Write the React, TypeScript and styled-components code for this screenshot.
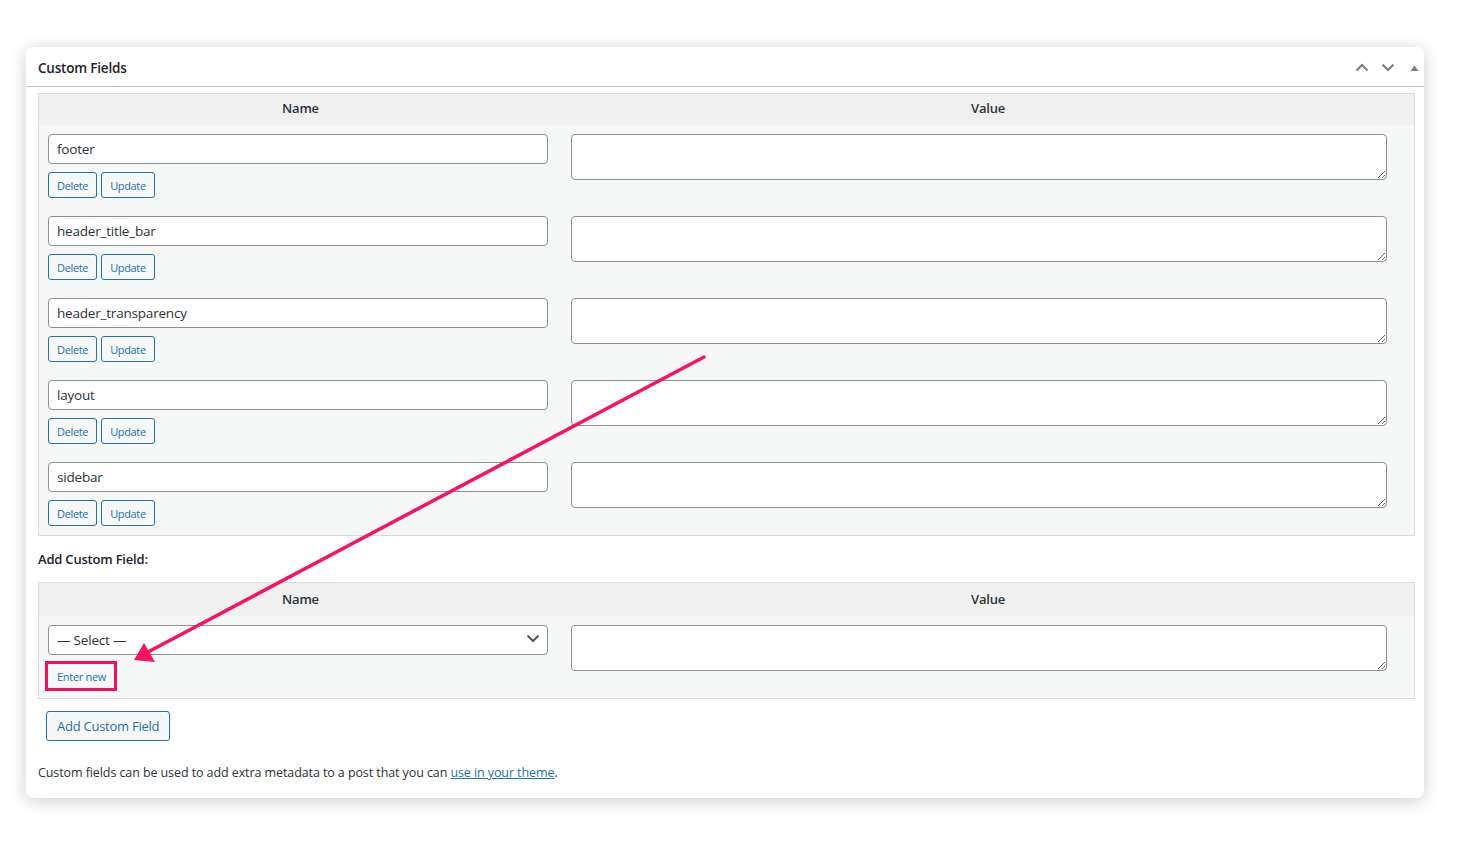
import React from "react";
import styled, { createGlobalStyle } from "styled-components";

const Global = createGlobalStyle`
  html, body { margin: 0; padding: 0; background: #ffffff; }
  body { font-family: "Open Sans", "Noto Sans", sans-serif; color: #1d2327; }
  * { box-sizing: border-box; }
`;

const Page = styled.div`
  position: relative;
  width: 1478px;
  height: 841px;
  padding: 47px 54px 0 26px;
`;

const Card = styled.section`
  background: #fff;
  border-radius: 7px;
  box-shadow: 0 3px 18px rgba(0, 0, 0, 0.2);
  height: 751px;
  display: flex;
  flex-direction: column;
`;

const Header = styled.header`
  height: 40px;
  border-bottom: 1px solid #c3c4c7;
  display: flex;
  align-items: center;
  justify-content: space-between;
  padding: 2px 0 0 12px;
`;

const Title = styled.h2`
  margin: 0;
  font-size: 13.5px;
  font-weight: 600;
  color: #1d2327;
  letter-spacing: -0.2px;
`;

const HeaderActions = styled.div`
  display: flex;
  align-items: center;
`;

const IconButton = styled.span<{ $w?: number; $ml?: number }>`
  width: ${(p) => p.$w ?? 26}px;
  margin-left: ${(p) => p.$ml ?? 0}px;
  height: 26px;
  display: flex;
  align-items: center;
  justify-content: center;
  color: #787c82;
`;

const Inside = styled.div`
  padding: 6px 9px 0 12px;
  display: flex;
  flex-direction: column;
`;

const Table = styled.div`
  border: 1px solid #dcdcde;
  background: #f6f7f7;
`;

const Row = styled.div`
  display: grid;
  grid-template-columns: 523px 1fr;
`;

const HeadRow = styled(Row)<{ $h: number; $pb: number }>`
  background: #f0f0f1;
  height: ${(p) => p.$h}px;
  padding-bottom: ${(p) => p.$pb}px;
  align-items: center;
`;

const HeadCell = styled.div`
  text-align: center;
  font-weight: 600;
  font-size: 13px;
  color: #2c3338;
  letter-spacing: -0.2px;
`;

const NameCell = styled.div`
  padding: 9px 14px 9px 9px;
  display: flex;
  flex-direction: column;
  gap: 8px;
`;

const ValueCell = styled.div`
  padding: 9px 27px 9px 9px;
`;

const TextInput = styled.input`
  width: 500px;
  height: 30px;
  border: 1px solid #8c8f94;
  border-radius: 4px;
  padding: 0 8px;
  font-family: inherit;
  font-size: 13.5px;
  color: #2c3338;
  background: #fff;
  letter-spacing: -0.2px;
  outline: none;
`;

const TextArea = styled.textarea`
  display: block;
  width: 816px;
  height: 46px;
  border: 1px solid #8c8f94;
  border-radius: 4px;
  background: #fff;
  resize: vertical;
  font-family: inherit;
  outline: none;
`;

const ButtonRow = styled.div`
  display: flex;
  gap: 4px;
`;

const SmallButton = styled.button`
  height: 26px;
  padding: 0 8px;
  border: 1px solid #2271b1;
  border-radius: 3px;
  background: #f6f7f7;
  color: #2271b1;
  font-family: inherit;
  font-size: 11px;
  letter-spacing: -0.35px;
  cursor: pointer;
`;

const SectionLabel = styled.p`
  margin: 0;
  height: 46px;
  display: flex;
  align-items: center;
  font-size: 13px;
  font-weight: 600;
  color: #1d2327;
  letter-spacing: -0.2px;
`;

const SelectWrap = styled.div`
  position: relative;
  width: 500px;
`;

const Select = styled.select`
  appearance: none;
  width: 500px;
  height: 30px;
  border: 1px solid #8c8f94;
  border-radius: 4px;
  background: #fff;
  padding: 0 24px 0 8px;
  font-family: inherit;
  font-size: 13.5px;
  color: #2c3338;
  letter-spacing: -0.2px;
  outline: none;
`;

const SelectChevron = styled.span`
  position: absolute;
  right: 8px;
  top: 9px;
  color: #50575e;
  display: flex;
  pointer-events: none;
`;

const EnterNew = styled.a`
  align-self: flex-start;
  height: 24px;
  margin: 1px 0 1px 0;
  padding: 0 8px 0 9px;
  display: flex;
  align-items: center;
  font-size: 11px;
  color: #2271b1;
  text-decoration: none;
  letter-spacing: -0.3px;
  outline: 3px solid #f2125a;
`;

const AddRow = styled.div`
  padding: 12px 0 0 8px;
`;

const PrimaryButton = styled.button`
  height: 30px;
  padding: 0 10px;
  border: 1px solid #2271b1;
  border-radius: 3px;
  background: #f6f7f7;
  color: #2271b1;
  font-family: inherit;
  font-size: 13px;
  letter-spacing: -0.25px;
  cursor: pointer;
`;

const Note = styled.p`
  margin: 22px 0 0 0;
  font-size: 12.5px;
  color: #2c3338;
  letter-spacing: -0.09px;
  line-height: 20px;
  a { color: #2271b1; text-decoration: underline; }
`;

const Overlay = styled.svg`
  position: absolute;
  left: 0;
  top: 0;
  pointer-events: none;
`;

const Chevron = ({ up }: { up?: boolean }) => (
  <svg width="14" height="9" viewBox="0 0 14 9">
    <path
      d={up ? "M1.5 7.5 L7 2 L12.5 7.5" : "M1.5 1.5 L7 7 L12.5 1.5"}
      fill="none"
      stroke="currentColor"
      strokeWidth="2"
    />
  </svg>
);

const fields = ["footer", "header_title_bar", "header_transparency", "layout", "sidebar"];

export default function App() {
  return (
    <>
      <Global />
      <Page>
        <Card>
          <Header>
            <Title>Custom Fields</Title>
            <HeaderActions>
              <IconButton><Chevron up /></IconButton>
              <IconButton><Chevron /></IconButton>
              <IconButton $w={20} $ml={3}>
                <svg width="9" height="6" viewBox="0 0 9 6"><path d="M0.5 6 L4.5 0.5 L8.5 6 Z" fill="currentColor" /></svg>
              </IconButton>
            </HeaderActions>
          </Header>
          <Inside>
            <Table>
              <HeadRow $h={31} $pb={3}>
                <HeadCell>Name</HeadCell>
                <HeadCell>Value</HeadCell>
              </HeadRow>
              {fields.map((f) => (
                <Row key={f}>
                  <NameCell>
                    <TextInput defaultValue={f} />
                    <ButtonRow>
                      <SmallButton>Delete</SmallButton>
                      <SmallButton>Update</SmallButton>
                    </ButtonRow>
                  </NameCell>
                  <ValueCell>
                    <TextArea />
                  </ValueCell>
                </Row>
              ))}
            </Table>
            <SectionLabel>Add Custom Field:</SectionLabel>
            <Table>
              <HeadRow $h={33} $pb={2}>
                <HeadCell>Name</HeadCell>
                <HeadCell>Value</HeadCell>
              </HeadRow>
              <Row>
                <NameCell>
                  <SelectWrap>
                    <Select defaultValue="">
                      <option value="">— Select —</option>
                    </Select>
                    <SelectChevron><Chevron /></SelectChevron>
                  </SelectWrap>
                  <EnterNew href="#">Enter new</EnterNew>
                </NameCell>
                <ValueCell>
                  <TextArea />
                </ValueCell>
              </Row>
            </Table>
            <AddRow>
              <PrimaryButton>Add Custom Field</PrimaryButton>
            </AddRow>
            <Note>
              Custom fields can be used to add extra metadata to a post that you can{" "}
              <a href="#">use in your theme</a>.
            </Note>
          </Inside>
        </Card>
        <Overlay width="1478" height="841" viewBox="0 0 1478 841">
          <line x1="704" y1="357" x2="148" y2="652" stroke="#f7145b" strokeWidth="3.5" strokeLinecap="round" />
          <polygon points="134,660 144,643 155,662" fill="#f7145b" />
        </Overlay>
      </Page>
    </>
  );
}
